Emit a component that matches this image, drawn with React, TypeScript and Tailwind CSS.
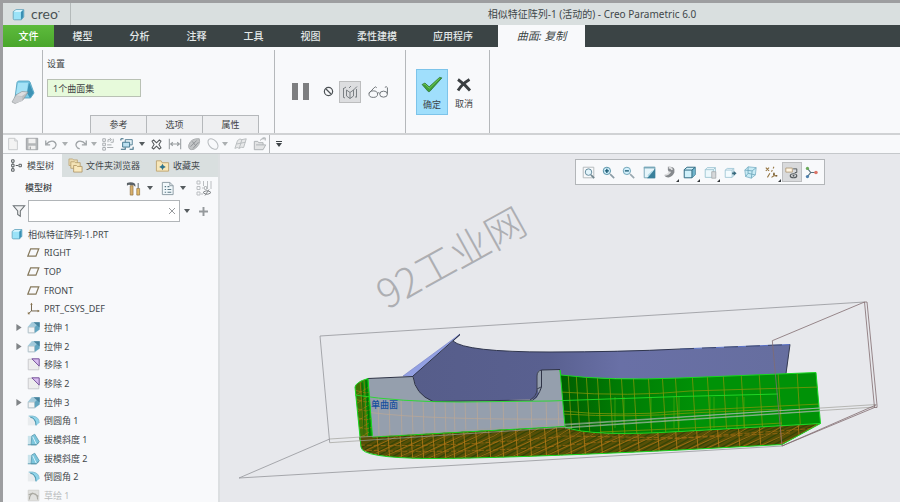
import type { ReactNode } from "react";

type IconProps = { className?: string; children: ReactNode };

function Icon({ className = "size-[14px]", children }: IconProps) {
  return (
    <svg viewBox="0 0 16 16" fill="none" className={`shrink-0 ${className}`} aria-hidden="true">
      {children}
    </svg>
  );
}

function Caret({ className = "text-[#555b5e]" }: { className?: string }) {
  return (
    <svg viewBox="0 0 6 4" className={`h-1 w-1.5 shrink-0 ${className}`} aria-hidden="true">
      <path d="M0 0h6L3 4z" fill="currentColor" />
    </svg>
  );
}

function CubeIcon({ className }: { className?: string }) {
  return (
    <Icon className={className}>
      <path d="M1.500 4.500 5 2h9.500v9l-3 3.500H3q-1.500 0-1.500-1.500z" fill="#9be3f8" stroke="#5f9fb8" />
      <path d="M2.500 4.500 5 2.500h8.500L11 5H2.500z" fill="#d5f4fd" />
      <path d="M11 5l3-3v9L11 14.500z" fill="#3a8fb3" />
    </Icon>
  );
}

function PlaneIcon() {
  return (
    <Icon className="size-[13px]">
      <path d="M4.500 3.500H14.500L11 12.500H1z" stroke="#85795c" strokeWidth="1.500" />
    </Icon>
  );
}

function CsysIcon() {
  return (
    <Icon className="size-[13px]">
      <path d="M5.500 2v9H15M5.500 11l-4 3.500" stroke="#6f6248" strokeWidth="1.200" />
      <path d="M4 3.500 5.500 1 7 3.500zM13 9.500l2.500 1.500-2.500 1.500zM1 12v3h3z" fill="#8a744c" />
    </Icon>
  );
}

function ExtrudeIcon() {
  return (
    <Icon className="size-[13px]">
      <path d="M1 7 6 1.500h9.500v9L10 15H1z" fill="#b5d8e6" />
      <path d="M1.500 7.500H9.500v7h-8z" fill="#f3f5f6" stroke="#b3bcc2" />
      <path d="M1.500 7 6 1.500h9.500L9.500 7z" fill="#a3cadb" />
      <path d="M9.500 7.500 15.500 1.500v9L9.500 14.500z" fill="#62a5c0" />
      <path d="M8 1.500h7.500V8z" fill="#46829c" />
    </Icon>
  );
}

function RemoveIcon() {
  return (
    <Icon className="size-[13px]">
      <path d="M1.500 1.500h13v13h-13z" fill="#ededed" stroke="#c2c2c5" />
      <path d="M6 1h9v9z" fill="#d9bdf0" stroke="#75509a" strokeWidth="1.200" />
    </Icon>
  );
}

function RoundIcon() {
  return (
    <Icon className="size-[13px]">
      <path d="M1 4h9v10H1z" fill="#e9ecee" />
      <path d="M2 2.500h5q8 1 8 8.500l-4 3.500Q11 6.500 2 2.500z" fill="#8fd4ea" />
      <path d="M2 2.500h5q8 1 8 8.500" stroke="#7cb9cd" />
      <path d="M4 4q7 1 7 10" stroke="#347e98" />
    </Icon>
  );
}

function DraftIcon() {
  return (
    <Icon className="size-[13px]">
      <path d="M1 3.500h6v11H1z" fill="#c9e3eb" />
      <path d="M6 3.500 9.500 1.500l5.500 9-3.500 4H5z" fill="#7cc6dd" stroke="#5c9bb0" />
      <path d="M7 4.500 11.500 14" stroke="#edfaff" />
      <path d="M1 14.500h10.500l3.500-3" stroke="#4b8fa5" />
    </Icon>
  );
}

function SketchIcon() {
  return (
    <Icon className="size-[13px]">
      <path d="M1.500 1.500h13v13h-13z" fill="#e1e1df" stroke="#cfcfcc" />
      <path d="M3 13C3 3 13 3 13 13M2 7l5-2 7 4" stroke="#aaa9a2" strokeWidth="1.300" />
    </Icon>
  );
}

const treeRows: { label: string; icon: ReactNode; expandable?: boolean; muted?: boolean }[] = [
  { label: "RIGHT", icon: <PlaneIcon /> },
  { label: "TOP", icon: <PlaneIcon /> },
  { label: "FRONT", icon: <PlaneIcon /> },
  { label: "PRT_CSYS_DEF", icon: <CsysIcon /> },
  { label: "拉伸 1", icon: <ExtrudeIcon />, expandable: true },
  { label: "拉伸 2", icon: <ExtrudeIcon />, expandable: true },
  { label: "移除 1", icon: <RemoveIcon /> },
  { label: "移除 2", icon: <RemoveIcon /> },
  { label: "拉伸 3", icon: <ExtrudeIcon />, expandable: true },
  { label: "倒圆角 1", icon: <RoundIcon /> },
  { label: "拔模斜度 1", icon: <DraftIcon /> },
  { label: "拔模斜度 2", icon: <DraftIcon /> },
  { label: "倒圆角 2", icon: <RoundIcon /> },
  { label: "草绘 1", icon: <SketchIcon />, muted: true },
];

function TitleBar() {
  return (
    <header className="flex h-[22px] shrink-0 items-center bg-[#d9dfdf]">
      <div className="flex h-full w-[68px] items-center gap-1.5 border-r border-[#b4baba] pl-[9px]">
        <CubeIcon className="size-[13px]" />
        <span className="font-['Lato'] text-[14px] leading-none text-[#4a5254]">
          creo<span className="align-top text-[8px]">·</span>
        </span>
      </div>
      <h1 className="flex-1 pl-[213px] text-center text-[10px] text-[#3f474a]">
        相似特征阵列-1 (活动的) - Creo Parametric 6.0
      </h1>
    </header>
  );
}

function MenuBar() {
  return (
    <nav className="flex h-[22px] shrink-0 bg-[#3b4445] text-[10px] font-medium text-[#e3e8e8]">
      <button className="w-[51px] bg-gradient-to-b from-[#5dbb3c] to-[#4aa62c] text-white">文件</button>
      {["模型", "分析", "注释", "工具", "视图"].map((name) => (
        <button key={name} className="w-[57px]">
          {name}
        </button>
      ))}
      {["柔性建模", "应用程序"].map((name) => (
        <button key={name} className="w-[76px]">
          {name}
        </button>
      ))}
      <button className="ml-[7px] w-[87px] bg-[#f8f9fb] text-[11px] font-normal text-[#3b4445] italic">曲面: 复制</button>
    </nav>
  );
}

function Ribbon() {
  return (
    <section className="flex h-[88px] shrink-0 border-b-2 border-[#d0d2d4] bg-[#f8f9fb] pt-[3px]">
      <div className="flex w-10 items-center justify-center border-r border-[#b5b8bb]">
        <svg viewBox="0 0 24 24" className="size-6" aria-hidden="true">
          <path d="M6 2.500Q6.500 1 8 1h9q1.500 0 2 1l4 11-3.500 5H4z" fill="#7dcbe6" stroke="#4c9cba" strokeWidth=".8" />
          <path d="M7 3h10l-1.500 10L5 14z" fill="#a4e2f6" />
          <path d="m18 2 4.500 11-3.500 5-3-5z" fill="#3d93b5" />
          <path d="m5 15 6-3.500 6 .5-5 8-8 3.500L1 22z" fill="#bcbfc2" stroke="#8e9396" strokeWidth=".6" />
          <path d="m5 15.500 6-3.500 5 .5-5 3.500z" fill="#dedfe1" />
          <path d="m5 16 6 .5.500 4.500-7 2-3-1z" fill="#cbcdd0" />
        </svg>
      </div>
      <div className="flex w-[232px] flex-col justify-between border-r border-[#b5b8bb] pl-1 text-[9px] text-[#3e4346]">
        <div className="flex flex-col items-start pt-2">
          <label htmlFor="surface-set" className="leading-[12px]">
            设置
          </label>
          <input
            id="surface-set"
            defaultValue="1个曲面集"
            className="mt-[9px] h-[18px] w-[94px] border border-[#b9c1b4] bg-[#e7fadb] px-[5px] text-[9px] outline-none"
          />
        </div>
        <div className="flex self-end pr-[15px]">
          {["参考", "选项", "属性"].map((name) => (
            <button key={name} className="-ml-px h-[18px] w-[57px] border border-b-0 border-[#b5b8bb] bg-[#eeeff1]">
              {name}
            </button>
          ))}
        </div>
      </div>
      <div className="flex w-[131px] items-center border-r border-[#b5b8bb] pl-[17px]">
        <button aria-label="暂停" className="flex gap-[5px]">
          <span className="h-[17px] w-1.5 bg-[#7d7e80]" />
          <span className="h-[17px] w-1.5 bg-[#7d7e80]" />
        </button>
        <button aria-label="无预览" className="ml-3.5">
          <Icon className="size-[11px]">
            <circle cx="8" cy="8" r="6" stroke="#4e5356" strokeWidth="1.800" />
            <path d="m4 4 8 8" stroke="#4e5356" strokeWidth="1.800" />
          </Icon>
        </button>
        <button
          aria-label="连接预览"
          className="ml-[5px] flex size-[22px] items-center justify-center border border-[#bcbdbe] bg-[#dddee0]"
        >
          <Icon className="size-4">
            <path d="M1.500 4v9M1 5l3-2M4.500 6v6M4.500 6 8 8.500 11.500 6v6L8 14.500 4.500 12M8 8.500v6M11.500 6 15 2.500M14.500 5v8M7 4l2-2M1 13l2 1M13 13h2" stroke="#7b8084" />
          </Icon>
        </button>
        <button aria-label="特征预览" className="ml-1.5">
          <svg viewBox="0 0 24 14" className="h-3 w-[22px]" fill="none" stroke="#6a7074" strokeWidth="1.100" aria-hidden="true">
            <ellipse cx="6.500" cy="9.500" rx="5" ry="3.800" />
            <ellipse cx="18.500" cy="9.500" rx="4.500" ry="3.500" />
            <path d="M11.500 8.500q1.500-1.500 2.500 0M1.500 8.500l6-6.500q2-2 3 0M23 9V2q-1-2-3-.5" />
          </svg>
        </button>
      </div>
      <div className="flex w-[84px] items-center gap-1 border-r border-[#b5b8bb] pl-2.5 text-[9px] text-[#3e4346]">
        <button className="flex h-[46px] w-8 flex-col items-center border border-[#7dc4ea] bg-[#a0dffc] pt-1.5">
          <svg viewBox="0 0 24 18" className="h-[17px] w-6" aria-hidden="true">
            <path d="m1.500 9 3-1.500 4.500 4L20 1.500l2.500.5L9.500 16.500H8z" fill="#3f9f39" stroke="#2a6f2b" strokeWidth=".8" />
            <path d="m3 9 1.500-.5 4.500 4.500L20 2.500" stroke="#74cc55" fill="none" />
          </svg>
          <span className="mt-1.5 leading-[12px]">确定</span>
        </button>
        <button className="flex h-[46px] w-6 flex-col items-center pt-[9px]">
          <svg viewBox="0 0 16 14" className="h-3.5 w-4" aria-hidden="true">
            <path d="M2 1.500q7 5 12 11M13.500 1.500Q6 6 2 12.500" stroke="#3a3e41" strokeWidth="2.800" fill="none" />
          </svg>
          <span className="mt-1.5 leading-[12px]">取消</span>
        </button>
      </div>
    </section>
  );
}

function Undo({ flip = false }: { flip?: boolean }) {
  return (
    <Icon>
      <g transform={flip ? "matrix(-1 0 0 1 16 0)" : undefined} stroke="#9ea3a6" strokeWidth="1.500">
        <path d="M3 8q3-4 8-3 5 3 1 7.500l-2.500 1M2 4v5h5" />
      </g>
    </Icon>
  );
}

function QuickAccess() {
  return (
    <div className="flex h-[19px] shrink-0 items-center border-b border-[#c5c8cb] bg-[#f8f9fb] pl-[3px]">
      <button aria-label="新建" className="mr-[5px]">
        <Icon>
          <path d="M3 1.500h7l3 3v10H3zM10 1.500v3h3" fill="#f3f3f3" stroke="#c3c6c8" />
        </Icon>
      </button>
      <button aria-label="保存" className="mr-[5px]">
        <Icon>
          <path d="M1.500 1.500h13v13h-13z" fill="#b4b7b9" stroke="#9a9ea1" />
          <path d="M4 2h8v5H4zM4 10h8v4H4z" fill="#f0f0f0" />
          <path d="M6 11v3" stroke="#888" />
        </Icon>
      </button>
      <button aria-label="撤消" className="mr-1">
        <Undo />
      </button>
      <button aria-label="撤消列表" className="mr-1.5">
        <Caret className="text-[#abafb1]" />
      </button>
      <button aria-label="重做" className="mr-[3px]">
        <Undo flip />
      </button>
      <button aria-label="重做列表" className="mr-1">
        <Caret className="text-[#abafb1]" />
      </button>
      <button aria-label="重新生成" className="mr-[5px]">
        <Icon>
          <path d="M2 2h3v3H2zM2 7h3v3H2zM2 12h3v3H2zM7 12h7M7 9h5M8 6V3h3M14 2v4h-3M10 1l2 2-2 2" stroke="#a8acaf" strokeWidth="1.100" />
        </Icon>
      </button>
      <button aria-label="窗口" className="mr-[5px]">
        <Icon>
          <path d="M6 3h8v6H6z" fill="#e6f3f9" stroke="#5a8297" strokeWidth="1.100" />
          <path d="M3 6h8v5.500H3z" fill="#bde1f1" stroke="#437890" strokeWidth="1.100" />
          <path d="M1 2h3M1 4V2M11 14h4v-3M1 14h5v-2" stroke="#34677f" strokeWidth="1.200" />
        </Icon>
      </button>
      <button aria-label="窗口列表" className="mr-[5px]">
        <Caret />
      </button>
      <button aria-label="关闭" className="mr-[5px]">
        <Icon className="size-[13px]">
          <path d="m2.500 4 2-1.500L8 6l3.500-3.500 2 1.500L11 8l2.500 4-2 1.500L8 10l-3.500 3.500-2-1.500L5 8z" stroke="#55595c" strokeWidth="1.300" />
        </Icon>
      </button>
      <button aria-label="测量" className="mr-[5px]">
        <Icon>
          <path d="M1.500 2v12M14.500 2v12M3 8h10M5.500 6 3 8l2.500 2M10.500 6 13 8l-2.500 2" stroke="#989da0" strokeWidth="1.200" />
        </Icon>
      </button>
      <button aria-label="着色" className="mr-[5px]">
        <Icon>
          <path d="M2 9q3-8 12-7 2 7-6 12-7 2-6-5z" fill="#c2c4c6" stroke="#a3a7a9" />
          <path d="m4 11 7-7M7 13l6-7M6 5l4 5" stroke="#8b8f92" />
        </Icon>
      </button>
      <button aria-label="基准曲线" className="mr-0.5">
        <Icon>
          <ellipse cx="8" cy="8" rx="4.500" ry="7" transform="rotate(-42 8 8)" stroke="#b9bdc0" strokeWidth="1.200" />
        </Icon>
      </button>
      <button aria-label="曲线列表" className="mr-1.5">
        <Caret className="text-[#abafb1]" />
      </button>
      <button aria-label="曲面" className="mr-[5px]">
        <Icon>
          <path d="M1 13 4 4q3-3 5-1l5-1-3 10q-3-1-5 1-2-2-5 0zM9 3 6 13M3 8l10-2" fill="#e7e8e9" stroke="#b5b9bb" />
        </Icon>
      </button>
      <button aria-label="打开" className="mr-0.5">
        <Icon>
          <path d="M1.500 5h4l1 1.500h5V9h3l-3 5.500h-10zM3.500 9h8M8 4q2-3 5-2M11 1h3v3" fill="#e3e4e5" stroke="#adb1b4" strokeWidth="1.100" />
        </Icon>
      </button>
      <span className="h-full border-l border-[#b5b8bb]" />
      <button aria-label="自定义快速访问工具栏" className="ml-1.5 flex flex-col items-center gap-px">
        <span className="h-px w-1.5 bg-[#3f4548]" />
        <Caret className="text-[#3f4548]" />
      </button>
    </div>
  );
}

function Sidebar() {
  return (
    <aside className="flex w-[217px] shrink-0 flex-col overflow-hidden border-r-2 border-[#dcdfe1] bg-[#f8f9fb] text-[9px] text-[#43484b]">
      <div className="flex h-[23px] shrink-0 bg-[#d9dfdf]">
        <button className="flex w-[59px] items-center gap-1 bg-[#f8f9fb] pl-[7px]">
          <Icon className="size-[13px]">
            <path d="M2 1h3v3H2zM2 6.500h3v3H2zM2 12h3v3H2zM11 6.500h3v3h-3zM3.500 4v2M3.500 10v2M7 8h3" stroke="#555b5e" strokeWidth="1.200" />
          </Icon>
          模型树
        </button>
        <button className="flex w-[86px] items-center gap-[3px] pl-1.5">
          <Icon className="size-[15px]">
            <path d="M1 1h4l1 1h4v6H1z" fill="#ecdcb2" stroke="#b9a272" strokeWidth=".8" />
            <path d="M3 4h4l1 1h5v6H3z" fill="#f4e3b6" stroke="#b39a66" strokeWidth=".8" />
            <path d="M6 8h3l1 1h5v6H6z" fill="#fae9bc" stroke="#a98f5c" strokeWidth=".8" />
          </Icon>
          文件夹浏览器
        </button>
        <button className="flex items-center gap-[3px] pl-[7px]">
          <Icon className="size-[15px]">
            <path d="M1.500 3h5l1 2h7v9h-13z" fill="#f7e6b8" stroke="#bfa573" />
            <path d="m8 6 1 2 2.500 1.500L9 11l-1 2-1-2-2.500-1.500L7 8z" fill="#2f738c" />
          </Icon>
          收藏夹
        </button>
      </div>
      <div className="flex h-[22px] shrink-0 items-center pl-[22px]">
        <h2 className="w-[101px] font-medium">模型树</h2>
        <button aria-label="设置">
          <Icon className="size-[15px]">
            <path d="M1 2q5-1.500 8 .5L10 4v2L8 4.500H5q-2-1-4 .5z" fill="#5a6166" />
            <path d="M4.500 5h3v10h-3z" fill="#d9b06c" stroke="#8b6c3d" strokeWidth=".7" />
            <path d="M13 2v6" stroke="#71797e" strokeWidth="1.200" />
            <path d="M11.500 8h3v7h-3z" fill="#e4bb68" stroke="#8b6c3d" strokeWidth=".7" />
          </Icon>
        </button>
        <button aria-label="设置列表" className="ml-1.5">
          <Caret />
        </button>
        <button aria-label="显示" className="ml-[7px]">
          <Icon className="size-[15px]">
            <path d="M2.500 1.500h8l3.500 3.500v9.500h-11.500zM10.500 1.500v3.500h3.500" fill="#f1f8fb" stroke="#8b9aa2" />
            <path d="M5 6h1.500M5 9h1.500M5 12h1.500M8 6h2M8 9h4M8 12h4" stroke="#5b7885" strokeWidth="1.200" />
          </Icon>
        </button>
        <button aria-label="显示列表" className="ml-[5px]">
          <Caret />
        </button>
        <button aria-label="隐藏树列" className="ml-2.5">
          <Icon className="size-4">
            <path d="M1 1h3v3H1zM1 6.500h3v3H1zM1 12h3v3H1zM6 8h2M8.500 6.500h2v3h-2zM7.500 1v5M11.500 1v8M15 1v8M5 14h2" stroke="#bbbec1" />
            <path d="M7 12.500q4-3.500 8 0-4 3.500-8 0zM9 15.500l4-6" stroke="#85898c" />
          </Icon>
        </button>
      </div>
      <div className="flex h-6 shrink-0 items-center pl-[9px]">
        <button aria-label="过滤" className="w-4">
          <Icon>
            <path d="M1.500 2h13L9.500 8v6L6.500 12V8z" fill="#f1f2f3" stroke="#6a7074" strokeWidth="1.200" />
          </Icon>
        </button>
        <div className="flex h-[22px] w-[152px] items-center border border-[#b1b5b8] bg-white">
          <input aria-label="搜索模型树" className="min-w-0 flex-1 px-1 text-[9px] outline-none" />
          <button aria-label="清除" className="pr-[3px]">
            <Icon className="size-2">
              <path d="m2 2 12 12M14 2 2 14" stroke="#8b8f92" strokeWidth="1.800" />
            </Icon>
          </button>
        </div>
        <button aria-label="过滤列表" className="ml-1">
          <Caret />
        </button>
        <button aria-label="添加" className="ml-2">
          <Icon className="size-[11px]">
            <path d="M8 1.500v13M1.500 8h13" stroke="#95999c" strokeWidth="2.800" />
          </Icon>
        </button>
      </div>
      <ul className="mt-[2px] grid h-[280px] shrink-0 auto-rows-fr">
        <li className="flex items-center gap-[5px] pl-2">
          <CubeIcon className="size-3" />
          相似特征阵列-1.PRT
        </li>
        {treeRows.map((row) => (
          <li key={row.label} className={row.muted ? "flex items-center text-[#b9bcbd]" : "flex items-center"}>
            <span className="flex w-6 justify-center pl-2">
              {row.expandable && (
                <button aria-label={`展开 ${row.label}`}>
                  <svg viewBox="0 0 6 8" className="h-[7px] w-1.5" aria-hidden="true">
                    <path d="M0 0v8l6-4z" fill="#808487" />
                  </svg>
                </button>
              )}
            </span>
            {row.icon}
            <span className="pl-1">{row.label}</span>
          </li>
        ))}
      </ul>
    </aside>
  );
}

const viewTools: { name: string; art: ReactNode; menu?: boolean; active?: boolean }[] = [
  {
    name: "重新调整",
    art: (
      <>
        <path d="M1.500 1.500h13v13h-13z" stroke="#a9afb2" />
        <circle cx="8" cy="7.500" r="4" fill="#e2f4fb" stroke="#638a9b" strokeWidth="1.200" />
        <path d="m11 11 4 4" stroke="#71868f" strokeWidth="2" />
      </>
    ),
  },
  {
    name: "放大",
    art: (
      <>
        <circle cx="6" cy="6" r="4.500" fill="#d3effb" stroke="#5590a6" strokeWidth="1.200" />
        <path d="M6 3.500v5M3.500 6h5" stroke="#15566f" strokeWidth="1.600" />
        <path d="m10 10 5 5" stroke="#8b9ca6" strokeWidth="2" />
      </>
    ),
  },
  {
    name: "缩小",
    art: (
      <>
        <circle cx="6" cy="6" r="4.500" fill="#d3effb" stroke="#6fa4b7" strokeWidth="1.200" />
        <path d="M3.500 6h5" stroke="#15566f" strokeWidth="1.600" />
        <path d="m10 10 5 5" stroke="#99a8b0" strokeWidth="2" />
      </>
    ),
  },
  {
    name: "重画",
    art: (
      <>
        <path d="M1.500 1.500h13v13h-13z" fill="#e6f5fa" stroke="#6499ad" />
        <path d="M15 3v12H5z" fill="#39809b" />
        <path d="M1 1h14v2H1z" fill="#7aa9ba" />
        <path d="m6 12 6-6" stroke="#a9d6e4" strokeWidth="1.400" />
      </>
    ),
  },
  {
    name: "渲染",
    menu: true,
    art: (
      <>
        <path d="M6 1q7-1 8 3v4q-2 5-7 6-5 0-5-3 4 0 5-2 1-2-1-4z" fill="#85898d" />
        <path d="M7 2q4 0 4 3M2 11q5 0 7-4" stroke="#dedfe0" strokeWidth="2" />
      </>
    ),
  },
  {
    name: "显示样式",
    menu: true,
    art: (
      <>
        <path d="M1.500 4.500 5 1.500h10v9l-4 4H1.500z" fill="#d0f0fa" stroke="#2c687f" strokeWidth="1.200" />
        <path d="m11 5 4-3.500v9l-4 4z" fill="#6fb3cb" />
        <path d="M1.500 5H11v9.500M11 5l4-3.500" stroke="#2c687f" strokeWidth="1.200" />
      </>
    ),
  },
  {
    name: "已保存方向",
    menu: true,
    art: (
      <>
        <path d="M1.500 4.500 4 2h10v9l-2 3H1.500z" fill="#ecf8fc" stroke="#94bfce" />
        <path d="M1.500 4.500H11.500V14M11.500 4.500 14 2" stroke="#94bfce" />
        <path d="M9.500 7h5v8h-5z" fill="#d6d8da" stroke="#a7abae" />
      </>
    ),
  },
  {
    name: "视图管理器",
    art: (
      <>
        <path d="M1.500 5 4 3h8v9l-2 2H1.500z" fill="#f3fbfe" stroke="#99c2d1" />
        <path d="M1.500 5H10v9M10 5l2-2" stroke="#99c2d1" />
        <path d="M10 8h2V6l3.500 3-3.500 3v-2h-2z" fill="#37697d" />
      </>
    ),
  },
  {
    name: "透视图",
    art: (
      <>
        <path d="M1 5 5 1l10 1-1 9-5 4-7-2z" fill="#c8ebf5" stroke="#7db2c6" />
        <path d="m1 5 9 1 5-4M10 6l-1 9M5 1v8l-3 4M5 9l9 2" stroke="#6ba5ba" />
      </>
    ),
  },
  {
    name: "基准显示",
    menu: true,
    art: (
      <>
        <path d="m1 2 4 4M5 2 1 6M3 14l3-5M11 1l-1 2M9 5 8 7M11 8v4h4M11 12l-3 2" stroke="#957541" strokeWidth="1.300" />
        <path d="M10 9h2v2h-2zM13 11h2v2h-2z" fill="#7b6136" />
      </>
    ),
  },
  {
    name: "注释显示",
    active: true,
    art: (
      <>
        <path d="M1 2.500h8v5H1z" fill="#fff5e3" stroke="#ad9573" />
        <path d="M10 3.500h4.500V8H12" stroke="#555b5e" strokeWidth="1.200" />
        <ellipse cx="10.500" cy="12" rx="4" ry="2.500" stroke="#555b5e" strokeWidth="1.400" />
        <circle cx="10.500" cy="12" r="1.200" fill="#555b5e" />
      </>
    ),
  },
  {
    name: "旋转中心",
    art: (
      <>
        <path d="m3 3 4 5-4 5M7 8h6" stroke="#57717d" strokeWidth="1.400" />
        <circle cx="3" cy="3" r="2" fill="#6bab5c" />
        <circle cx="3" cy="13" r="2" fill="#4f80ae" />
        <circle cx="13.500" cy="8" r="2.200" fill="#dc7568" />
      </>
    ),
  },
];

const greyRibs = [378, 389, 401, 412, 423, 434, 445, 454, 465, 477, 490, 503, 517, 531, 546, 558];
const baseRibs = [...greyRibs, 571, 585, 602, 620, 639, 659, 677, 698, 719, 740, 761, 782, 800];
const wallRibs = [568, 576, 586, 597, 609, 621, 633, 648, 662, 675, 692, 707, 723, 741, 759, 778, 797];
const innerRibs = [615, 624, 651, 674, 679, 710, 714, 737, 744];
const hatches = Array.from({ length: 62 }, (_, i) => 335 + i * 8);

function Model() {
  return (
    <svg
      viewBox="220 154 680 348"
      preserveAspectRatio="xMinYMin meet"
      fill="none"
      className="block w-full"
      role="img"
      aria-label="相似特征阵列-1"
    >
      <defs>
        <linearGradient id="blue" x1="413" x2="790" y1="0" y2="0" gradientUnits="userSpaceOnUse">
          <stop offset="0" stopColor="#565d8a" />
          <stop offset=".36" stopColor="#596090" />
          <stop offset=".55" stopColor="#6970a6" />
          <stop offset="1" stopColor="#666e9f" />
        </linearGradient>
        <linearGradient id="wall" x1="561" x2="700" y1="0" y2="0" gradientUnits="userSpaceOnUse">
          <stop offset="0" stopColor="#005f00" />
          <stop offset=".4" stopColor="#007b04" />
          <stop offset="1" stopColor="#009207" />
        </linearGradient>
        <clipPath id="baseClip">
          <path d="M359 437 372 436.500 565 426.500Q582 433 620 433.500L680 431.500 820.500 423.500 782 444.500 680 450Q500 458.500 430 458.500 364 458 361 447z" />
        </clipPath>
        <clipPath id="wallClip">
          <path d="M560 370 561 375Q610 381 680 378L816 372.500 820.500 423.500 680 431.500Q590 437 565 427z" />
        </clipPath>
        <clipPath id="faceClip">
          <path d="M370 397 420 402H563L565 426.500 372.500 436.500z" />
        </clipPath>
        <clipPath id="endClip">
          <path d="M355 387Q356 382 368 378.500L372.500 437 361 447z" />
        </clipPath>
      </defs>

      <g stroke="#94969a" strokeWidth=".8">
        <path d="M329.700 439 239 478 782 446M329.700 442.700 320 336 864.500 302" />
      </g>

      <path d="m403 376 57-42-47 42.500z" fill="#929fe2" stroke="#7581c5" strokeWidth=".6" />
      <path
        d="M453 341Q465 352 550 352 660 351 790 344.500L786 375 680 380 561 377 541 399 450 402H433Q416 396 413 376z"
        fill="url(#blue)"
      />
      <path d="M413 376 460 334.500 453 341Q465 352 550 352 620 352 680 349" stroke="#30364e" />
      <path d="m680 349 110-4.500" stroke="#3e5bc0" strokeWidth=".8" />
      <path d="m680 349 110-4.500" stroke="#30364e" strokeWidth=".8" strokeDasharray="14 8" />
      <path d="m790 344.500-4 29" stroke="#363c52" />

      <path
        d="M368 378.500 413 376.500Q415 394 433 401.500L533 400Q541 397 537 388V375Q537 370 542 370L560 369.500 565 427 372.500 437z"
        fill="#959fad"
      />
      <path
        d="M368 378.500 413 376.500Q415 394 433 401.500L533 400Q538 397 541.500 387V370L560 369.500"
        stroke="#2f3447"
      />
      <path d="M541.500 370Q537 371 537 376V389L541 387M537 389Q537 396 530 400" stroke="#3a3f50" />
      <g clipPath="url(#faceClip)" stroke="#c0a892" strokeWidth=".8" opacity=".8">
        {greyRibs.map((x) => (
          <path key={x} d={`M${x} 398 ${x + 1} 437`} />
        ))}
        <path d="M370 412.500Q430 420 565 419" />
      </g>

      <path d="M355 387Q356 382 368 378.500L372.500 437 361 447z" fill="#3f7305" />
      <path d="m362 382 6-3.500 4.500 58-4 2z" fill="#049307" />
      <g clipPath="url(#endClip)" stroke="#a27b12" strokeWidth=".7">
        {[390, 399, 408, 417, 426, 435].map((y) => (
          <path key={y} d={`M354 ${y} 366 ${y + 3} 373 ${y + 1}M354 ${y + 6} 369 ${y - 3}`} />
        ))}
        <path d="m360 380 5 68M364 380l4 68" />
      </g>
      <path d="m366 380 4 56M362 383l2 52" stroke="#075c08" strokeWidth=".8" />

      <path
        d="M359 437 372 436.500 565 426.500Q582 433 620 433.500L680 431.500 820.500 423.500 782 444.500 680 450Q500 458.500 430 458.500 364 458 361 447z"
        fill="#574f07"
      />
      <g clipPath="url(#baseClip)">
        {hatches.map((x) => (
          <path key={x} d={`M${x} 462 ${x + 54} 432 ${x + 75} 424`} stroke="#334507" strokeWidth="1.300" />
        ))}
        {hatches
          .filter((_, i) => i % 2 === 0)
          .map((x) => (
            <path key={x} d={`M${x + 5} 462 ${x + 63} 436 ${x + 89} 420`} stroke="#b47718" strokeWidth=".7" />
          ))}
        {baseRibs.map((x) => (
          <path key={x} d={`M${x - 2} 422 ${x + 1} 462`} stroke="#b67c18" strokeWidth=".8" />
        ))}
        <path
          d="M360 445Q450 448 565 436L680 438 820 428M360 450Q480 455 600 442L790 433"
          stroke="#a96f14"
          strokeWidth=".7"
          strokeDasharray="5 2"
        />
      </g>

      <path d="M560 370 561 375Q610 381 680 378L816 372.500 820.500 423.500 680 431.500Q590 437 565 427z" fill="url(#wall)" />
      <g clipPath="url(#wallClip)" stroke="#7f960a" strokeWidth=".8">
        {wallRibs.map((x) => (
          <path key={x} d={`M${x} 371 ${x + 4} 436`} />
        ))}
        {innerRibs.map((x) => (
          <path key={x} d={`M${x} 397V428`} stroke="#4dab0b" strokeWidth=".7" />
        ))}
        <path d="M560 392Q630 397 690 391L820 387M562 411Q620 417 680 411L820 404M562 414Q630 418 690 413L782 409M600 432Q700 428 782 423" />
      </g>
      <path d="M355 395Q400 402 460 402L550 401 680 396.500 778 394" stroke="#23dc28" strokeWidth=".9" />
      <path
        d="M355 387Q356 382 368 378.500M355 387 361 447Q361 458 430 458.500 500 458.500 680 450L782 444.500 820.500 423.500 816 372.500 680 378Q610 381 561 375L560 370 565 427Q590 437 680 431.500L820.500 423.500M368 378.500 372.500 437 565 426.500"
        stroke="#19d622"
      />

      <g stroke="#a0a19b" strokeWidth=".7">
        <path d="M329.700 439 876.500 404.500M329.700 442.700 875.500 407" />
        <path d="M565 425 820 408M565 428 820 411" stroke="#9fc0a8" />
      </g>
      <path
        d="M772.300 340.700 864.500 302 874.500 407.500 782 446zM864.500 302h2.500L877 405v2.500h-3M782 446l94-41"
        stroke="#826c70"
        strokeWidth=".8"
      />

      <text x="371" y="408" fontSize="9" fontWeight="500" fill="#164f9f">
        单曲面
      </text>
      <text
        transform="translate(387 310) rotate(-29)"
        fontSize="40"
        fontWeight="300"
        fill="#adaeb2"
        className="font-['Noto_Sans_CJK_SC',sans-serif]"
      >
        92工业网
      </text>
    </svg>
  );
}

function Viewport() {
  return (
    <main className="relative min-w-0 flex-1 overflow-hidden bg-[#e7e8ec]">
      <Model />
      <div
        role="toolbar"
        aria-label="图形工具栏"
        className="absolute top-[5px] right-[75px] flex h-[26px] w-[250px] items-center justify-between border border-[#b3b6b9] bg-[#f8f9fb] px-0.5"
      >
        {viewTools.map((tool) => (
          <button
            key={tool.name}
            aria-label={tool.name}
            className={
              tool.active
                ? "relative flex size-5 items-center justify-center border border-[#bdbec0] bg-[#d9dadc]"
                : "relative flex size-5 items-center justify-center"
            }
          >
            <Icon className="size-[13px]">{tool.art}</Icon>
            {tool.menu && (
              <svg viewBox="0 0 3 3" className="absolute right-0 bottom-0 size-[3px]" aria-hidden="true">
                <path d="M3 0v3H0z" fill="#34393c" />
              </svg>
            )}
          </button>
        ))}
      </div>
    </main>
  );
}

export default function App() {
  return (
    <div className="flex h-screen flex-col overflow-hidden border-t-[3px] border-l-[3px] border-[#9d9ea0] bg-[#f8f9fb] font-['Noto_Sans','Noto_Sans_CJK_SC',sans-serif]">
      <TitleBar />
      <MenuBar />
      <Ribbon />
      <QuickAccess />
      <div className="flex min-h-0 flex-1">
        <Sidebar />
        <Viewport />
      </div>
    </div>
  );
}
